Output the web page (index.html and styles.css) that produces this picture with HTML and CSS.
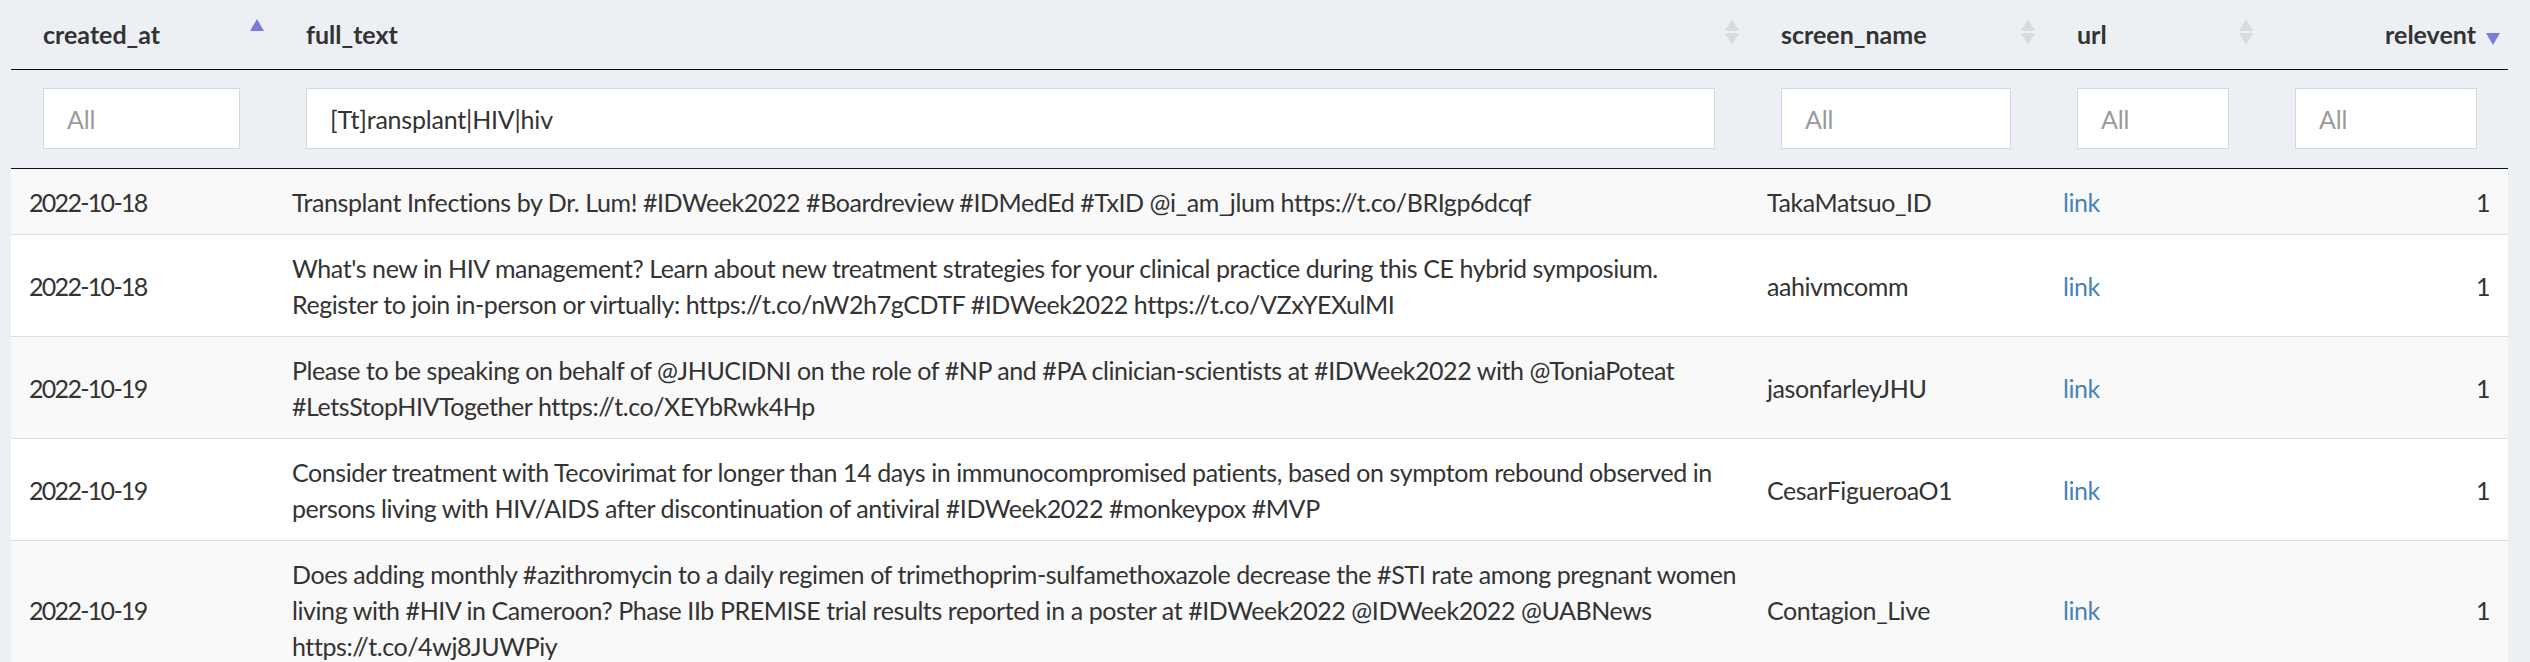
FILE: index.html
```html
<!DOCTYPE html>
<html>
<head>
<meta charset="utf-8">
<link rel="stylesheet" href="styles.css">
</head>
<body>
<div class="wrap">
<table class="dt">
<colgroup>
<col class="c1"><col class="c2"><col class="c3"><col class="c4"><col class="c5">
</colgroup>
<thead>
<tr class="head">
<th class="sort asc">created_at</th>
<th class="sort both">full_text</th>
<th class="sort both">screen_name</th>
<th class="sort both">url</th>
<th class="sort desc num">relevent</th>
</tr>
<tr class="filters">
<th><input type="text" placeholder="All"></th>
<th><input type="text" value="[Tt]ransplant|HIV|hiv"></th>
<th><input type="text" placeholder="All"></th>
<th><input type="text" placeholder="All"></th>
<th class="last"><input type="text" placeholder="All"></th>
</tr>
</thead>
<tbody>
<tr class="odd">
<td class="date">2022-10-18</td>
<td>Transplant Infections by Dr. Lum! #IDWeek2022 #Boardreview #IDMedEd #TxID @i_am_jlum https://t.co/BRIgp6dcqf</td>
<td>TakaMatsuo_ID</td>
<td><a href="#">link</a></td>
<td class="num">1</td>
</tr>
<tr class="even">
<td class="date">2022-10-18</td>
<td>What's new in HIV management? Learn about new treatment strategies for your clinical practice during this CE hybrid symposium.<br>Register to join in-person or virtually: https://t.co/nW2h7gCDTF #IDWeek2022 https://t.co/VZxYEXulMI</td>
<td>aahivmcomm</td>
<td><a href="#">link</a></td>
<td class="num">1</td>
</tr>
<tr class="odd">
<td class="date">2022-10-19</td>
<td>Please to be speaking on behalf of @JHUCIDNI on the role of #NP and #PA clinician-scientists at #IDWeek2022 with @ToniaPoteat<br>#LetsStopHIVTogether https://t.co/XEYbRwk4Hp</td>
<td>jasonfarleyJHU</td>
<td><a href="#">link</a></td>
<td class="num">1</td>
</tr>
<tr class="even">
<td class="date">2022-10-19</td>
<td>Consider treatment with Tecovirimat for longer than 14 days in immunocompromised patients, based on symptom rebound observed in<br>persons living with HIV/AIDS after discontinuation of antiviral #IDWeek2022 #monkeypox #MVP</td>
<td>CesarFigueroaO1</td>
<td><a href="#">link</a></td>
<td class="num">1</td>
</tr>
<tr class="odd">
<td class="date">2022-10-19</td>
<td>Does adding monthly #azithromycin to a daily regimen of trimethoprim-sulfamethoxazole decrease the #STI rate among pregnant women<br>living with #HIV in Cameroon? Phase IIb PREMISE trial results reported in a poster at #IDWeek2022 @IDWeek2022 @UABNews<br>https://t.co/4wj8JUWPiy</td>
<td>Contagion_Live</td>
<td><a href="#">link</a></td>
<td class="num">1</td>
</tr>
</tbody>
</table>
</div>
</body>
</html>
```
FILE: styles.css
```css
html, body {
  margin: 0;
  padding: 0;
  background: #eceff4;
  overflow: hidden;
}
body {
  font-family: Lato, "Open Sans", sans-serif;
  color: #333;
}
.wrap {
  padding-left: 11px;
}
.dt {
  border-collapse: collapse;
  table-layout: fixed;
  width: 2497px;
  font-size: 25px;
  line-height: 36px;
}
.c1 { width: 263px; }
.c2 { width: 1475px; }
.c3 { width: 296px; }
.c4 { width: 218px; }
.c5 { width: 245px; }

.head th {
  position: relative;
  text-align: left;
  font-weight: 700;
  padding: 16px 32px 17px;
  border-bottom: 1px solid #111;
  white-space: nowrap;
}
.head th.num { text-align: right; }

.sort::before,
.sort::after {
  content: "";
  position: absolute;
  right: 10px;
  width: 0;
  height: 0;
  border-left: 7px solid transparent;
  border-right: 7px solid transparent;
}
.sort::before {
  top: 19px;
  border-bottom: 12px solid #d9dadc;
}
.sort::after {
  top: 33px;
  border-top: 12px solid #d9dadc;
}
.asc::before { border-bottom-color: #7b7bdc; }
.asc::after { border-top-color: transparent; }
.desc::before { border-bottom-color: transparent; }
.desc::after { border-top-color: #7b7bdc; right: 8px; }

.filters th {
  padding: 18px 34px 19px 32px;
  border-bottom: 1px solid #111;
  font-weight: 400;
}
.filters th.last { padding-right: 31px; }
.filters input {
  display: block;
  box-sizing: border-box;
  width: 100%;
  height: 61px;
  margin: 0;
  border: 1px solid #d5d8dc;
  background: #fff;
  padding: 0 23px;
  font-family: inherit;
  font-size: 25px;
  letter-spacing: -0.2px;
  color: #333;
  outline: none;
}
.filters input::placeholder { color: #9a9a9a; }

tbody td {
  padding: 15px 18px 14px;
  border-bottom: 1px solid #ddd;
  vertical-align: middle;
  white-space: nowrap;
  letter-spacing: -0.42px;
}
tbody td.date { letter-spacing: -1.7px; }
tbody td.num { text-align: right; }
tr.odd td { background: #f9f9f9; }
tr.even td { background: #fff; }
tbody a {
  color: #4683b8;
  text-decoration: none;
}
```
